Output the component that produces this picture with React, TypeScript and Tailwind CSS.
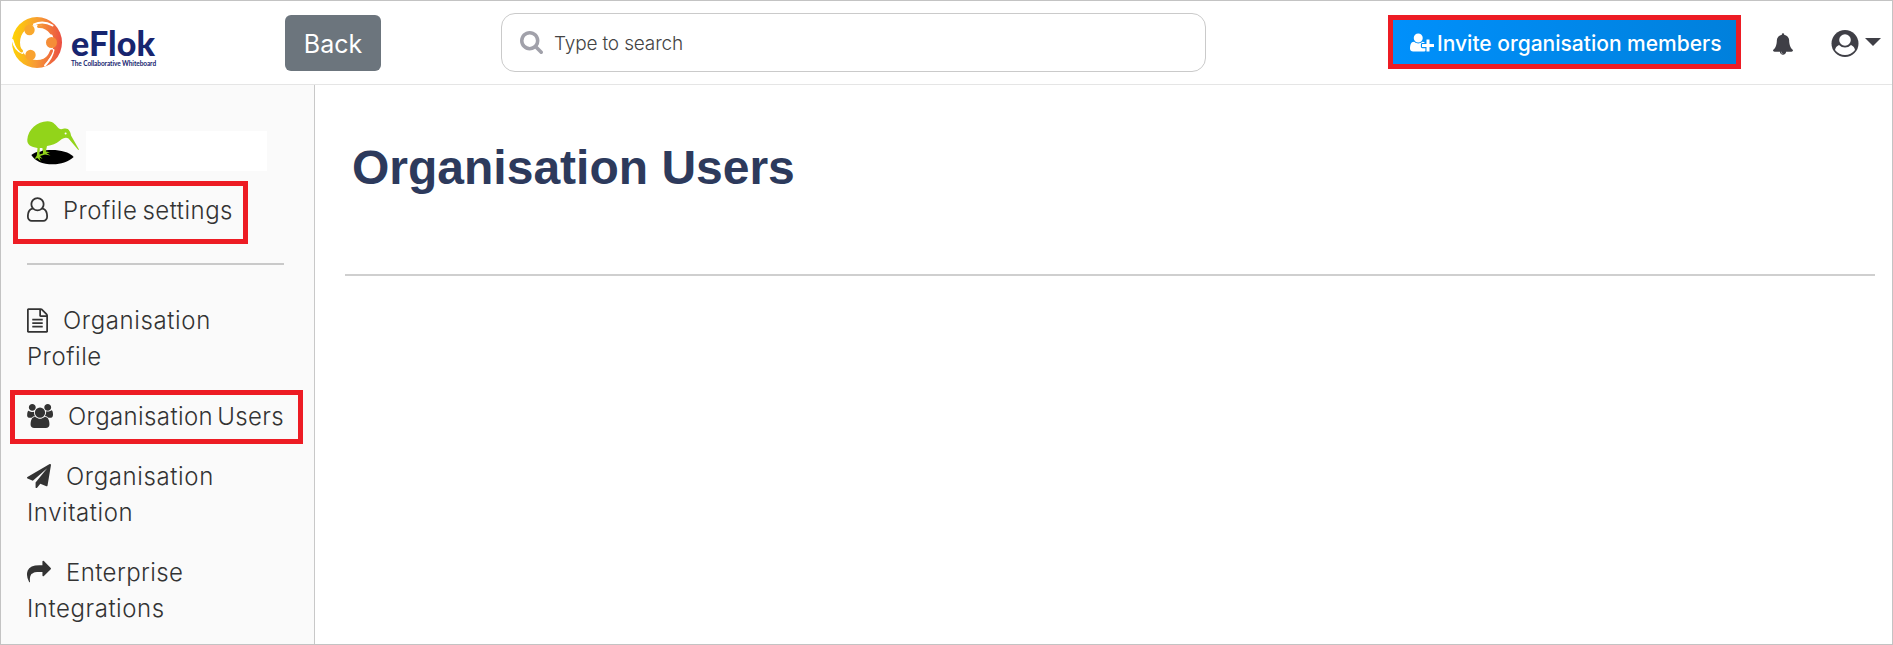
import React from "react";

type IconProps = { d: string; box: string; className: string };

function Icon({ d, box, className }: IconProps) {
  return (
    <svg viewBox={box} className={className} fill="currentColor" aria-hidden="true">
      <path d={d} />
    </svg>
  );
}

const USER = "M1201 784q47 14 89.5 38t89 73 79.5 115.5 55 172 22 236.5q0 154-100 263.5t-241 109.5h-854q-141 0-241-109.5t-100-263.5q0-131 22-236.5t55-172 79.5-115.5 89-73 89.5-38q-79-125-79-272 0-104 40.5-198.5t109.5-163.5 163.5-109.5 198.5-40.5 198.5 40.5 163.5 109.5 109.5 163.5 40.5 198.5q0 147-79 272zm-433-656q-159 0-271.5 112.5t-112.5 271.5 112.5 271.5 271.5 112.5 271.5-112.5 112.5-271.5-112.5-271.5-271.5-112.5zm427 1536q88 0 150.5-71.5t62.5-173.5q0-239-78.5-377t-225.5-145q-145 127-336 127t-336-127q-147 7-225.5 145t-78.5 377q0 102 62.5 173.5t150.5 71.5h854z";
const FILE = "M1596 380q28 28 48 76t20 88v1152q0 40-28 68t-68 28h-1344q-40 0-68-28t-28-68v-1600q0-40 28-68t68-28h896q40 0 88 20t76 48zm-444-244v376h376q-10-29-22-41l-313-313q-12-12-41-22zm384 1528v-1024h-416q-40 0-68-28t-28-68v-416h-768v1536h1280zm-1024-864q0-14 9-23t23-9h704q14 0 23 9t9 23v64q0 14-9 23t-23 9h-704q-14 0-23-9t-9-23v-64zm736 224q14 0 23 9t9 23v64q0 14-9 23t-23 9h-704q-14 0-23-9t-9-23v-64q0-14 9-23t23-9h704zm0 256q14 0 23 9t9 23v64q0 14-9 23t-23 9h-704q-14 0-23-9t-9-23v-64q0-14 9-23t23-9h704z";
const USERS = "M657 896q-162 5-265 128h-134q-82 0-138-40.5t-56-118.5q0-353 124-353 6 0 43.5 21t97.5 42.5 119 21.5q67 0 133-23-5 37-5 66 0 159 93 293zm1071 637q0 120-73 189.5t-194 69.5h-874q-121 0-194-69.5t-73-189.5q0-53 3.5-103.5t14-109 26.5-108.5 43-97.5 62-81 85.5-53.5 111.5-20q10 0 43 21.5t73 48 107 48 135 21.5 135-21.5 107-48 73-48 43-21.5q61 0 111.5 20t85.5 53.5 62 81 43 97.5 26.5 108.5 14 109 3.5 103.5zm-1024-1277q0 106-75 181t-181 75-181-75-75-181 75-181 181-75 181 75 75 181zm704 384q0 159-112.5 271.5t-271.5 112.5-271.5-112.5-112.5-271.5 112.5-271.5 271.5-112.5 271.5 112.5 112.5 271.5zm576 225q0 78-56 118.5t-138 40.5h-134q-103-123-265-128 93-134 93-293 0-29-5-66 66 23 133 23 59 0 119-21.5t97.5-42.5 43.5-21q124 0 124 353zm-128-609q0 106-75 181t-181 75-181-75-75-181 75-181 181-75 181 75 75 181z";
const PLANE = "M1764 11q33 24 27 64l-256 1536q-5 29-32 45-14 8-31 8-11 0-24-5l-453-185-242 295q-18 23-49 23-13 0-22-4-19-7-30.5-23.5t-11.5-36.5v-349l864-1059-1069 925-395-162q-37-14-40-55-2-40 32-59l1664-960q15-9 32-9 20 0 36 11z";
const SHARE = "M1792 640q0 26-19 45l-512 512q-19 19-45 19t-45-19-19-45v-256h-224q-98 0-175.5 6t-154 21.5-133 42.5-105.5 69.5-80 101-48.5 138.5-17.5 181q0 55 5 123 0 6 2.5 23.5t2.5 26.5q0 15-8.5 25t-23.5 10q-16 0-28-17-7-9-13-22t-13.5-30-10.5-24q-127-285-127-451 0-199 53-333 162-403 875-403h224v-256q0-26 19-45t45-19 45 19l512 512q19 19 19 45z";
const USER_PLUS = "M704 896q-159 0-271.5-112.5t-112.5-271.5 112.5-271.5 271.5-112.5 271.5 112.5 112.5 271.5-112.5 271.5-271.5 112.5zm960 128h352q13 0 22.5 9.5t9.5 22.5v192q0 13-9.5 22.5t-22.5 9.5h-352v352q0 13-9.5 22.5t-22.5 9.5h-192q-13 0-22.5-9.5t-9.5-22.5v-352h-352q-13 0-22.5-9.5t-9.5-22.5v-192q0-13 9.5-22.5t22.5-9.5h352v-352q0-13 9.5-22.5t22.5-9.5h192q13 0 22.5 9.5t9.5 22.5v352zm-736 224q0 52 38 90t90 38h256v238q-68 50-171 50h-874q-121 0-194-69t-73-190q0-53 3.5-103.5t14-109 26.5-108.5 43-97.5 62-81 85.5-53.5 111.5-20q19 0 39 17 79 61 154.5 91.5t164.5 30.5 164.5-30.5 154.5-91.5q20-17 39-17 132 0 217 96h-223q-52 0-90 38t-38 90v192z";
const BELL = "M912 1696q0-16-16-16-59 0-101.5-42.5t-42.5-101.5q0-16-16-16t-16 16q0 73 51.5 124.5t124.5 51.5q16 0 16-16zm816-288q0 52-38 90t-90 38h-448q0 106-75 181t-181 75-181-75-75-181h-448q-52 0-90-38t-38-90q50-42 91-88t85-119.5 74.5-158.5 50-206 19.5-260q0-152 117-282.5t307-158.5q-8-19-8-39 0-40 28-68t68-28 68 28 28 68q0 20-8 39 190 28 307 158.5t117 282.5q0 139 19.5 260t50 206 74.5 158.5 85 119.5 91 88z";
const SEARCH = "M1216 832q0-185-131.5-316.5t-316.5-131.5-316.5 131.5-131.5 316.5 131.5 316.5 316.5 131.5 316.5-131.5 131.5-316.5zm512 832q0 52-38 90t-90 38q-54 0-90-38l-343-342q-179 124-399 124-143 0-273.5-55.5t-225-150-150-225-55.5-273.5 55.5-273.5 150-225 225-150 273.5-55.5 273.5 55.5 225 150 150 225 55.5 273.5q0 220-124 399l343 343q37 37 37 90z";

function LogoMark() {
  return (
    <svg viewBox="0 0 52 54" className="h-[54px] w-[52px] shrink-0" fill="none" aria-hidden="true">
      <defs>
        <linearGradient id="ring" gradientUnits="userSpaceOnUse" x1="1" y1="26" x2="51" y2="30">
          <stop offset="0" stopColor="#fed403" />
          <stop offset="0.5" stopColor="#f79b35" />
          <stop offset="1" stopColor="#ea4c42" />
        </linearGradient>
      </defs>
      <path fillRule="evenodd" fill="url(#ring)" d="M26 1a25 25.500 0 1 1 0 51a25 25.500 0 1 1 0-51zM26 9a17 17.500 0 1 0 0 35a17 17.500 0 1 0 0-35z" />
      <g stroke="#fff" strokeWidth="2" strokeLinecap="round">
        <path d="M23 8.500Q32 4 41.500 9.500M1.500 24Q4 34.500 11.500 37M42.500 34Q41 42 34 49.500" />
      </g>
      <g stroke="url(#ring)" strokeWidth="3" strokeLinecap="round">
        <path d="M27.500 10.500Q35 10 40.500 17M5 22Q4.500 30 10.500 35M40.500 35Q38 42 31.500 46" />
      </g>
      <circle cx="18.500" cy="14" r="5.200" fill="#f9a82c" />
      <circle cx="40.500" cy="26.500" r="5.500" fill="#f58d38" />
      <circle cx="19.500" cy="39" r="5.200" fill="#f9a230" />
    </svg>
  );
}

function Kiwi() {
  return (
    <svg viewBox="0 0 54 45" className="h-[45px] w-[54px] shrink-0" aria-hidden="true">
      <path d="M4.300 34C9 30 17 29 25 29c9 0 17 2 21.700 7C41 41 34 43.300 26 43.300C15 43.300 8 40 4.300 34z" fill="#000" />
      <path d="M0.300 18.500C1 9 10 0.300 20.500 0.300C27 0.300 29 5 32 7.500C34 9 36 7.600 38.500 7.600C42 7.600 43.500 11 44 14.500L52 28.500L51.300 29L41.500 17.500C39 16 36 17 33 19.500C29 23 25 24.300 20 25L18.800 30.500L23 31.200L19.500 32.300L23.500 34.500L18 33.500L13 35L15.500 38L12.500 36.500L13.500 40L10.500 37L7.500 38L9.800 34.500L10.500 27C4 26 0 24 0.300 18.500z" fill="#92d41a" />
      <path d="M12.800 27h2.600l.5 4-3.300 2z" fill="#fafafa" />
      <path d="M12.500 31l3.500-1.500v3l-3.500 1z" fill="#000" />
      <circle cx="38.600" cy="12.500" r="1" fill="#fff" />
    </svg>
  );
}

function Rule({ className }: { className: string }) {
  return <hr className={`border-0 h-[2px] ${className}`} />;
}

export default function App() {
  return (
    <div className="flex h-[645px] w-[1893px] flex-col overflow-hidden border border-[#c3c3c3] bg-white font-['Inter','Liberation_Sans',sans-serif] text-[#333]">
      <header className="flex h-[84px] shrink-0 border-b border-[#e5e5e5]">
        <div className="flex w-[284px] pl-[10px] pt-[15px]">
          <LogoMark />
          <div className="ml-[8px] pt-[10px] font-['Lato','Inter',sans-serif] text-[#17256f]">
            <div className="h-[34px] whitespace-nowrap text-[34px] font-black leading-[34px] tracking-[0.1px]">eFlok</div>
            <div className="whitespace-nowrap text-[6.5px] font-bold leading-[8px] tracking-[-0.08px]">The Collaborative Whiteboard</div>
          </div>
        </div>
        <button className="mt-[14px] h-[56px] w-[96px] rounded-[6px] bg-[#6c757d] pt-[1px] text-[25px] leading-[36px] text-white">Back</button>
        <div className="ml-[120px] mt-[12px] flex h-[59px] w-[705px] items-center rounded-[14px] border border-[#cacaca] pl-[18px] text-[#444]">
          <Icon d={SEARCH} box="64 128 1664 1664" className="h-[23px] w-[23px] text-[#a1a1aa]" />
          <span className="ml-[11px] pt-[3px] text-[19px] font-light tracking-[-0.15px]">Type to search</span>
        </div>
        <div className="ml-[182px] mt-[14px] flex h-[54px] w-[353px] items-center border-[5px] border-[#ed1c24] bg-linear-to-r from-[#0090fb] to-[#0080dc] pl-[17px] text-white">
          <Icon d={USER_PLUS} box="0 128 2048 1536" className="h-[19px] w-[24px]" />
          <span className="ml-[3px] whitespace-nowrap pt-[3px] text-[21px] font-medium">Invite organisation members</span>
        </div>
        <Icon d={BELL} box="64 0 1664 1792" className="ml-[32px] mt-[32px] h-[22px] w-[20px] text-[#3f3f46]" />
        <svg viewBox="0 0 28 28" className="ml-[38px] mt-[28px] h-[28px] w-[28px]" aria-hidden="true">
          <circle cx="14" cy="14.500" r="13.500" fill="#3f3f46" />
          <circle cx="14" cy="11" r="5.800" fill="#fff" />
          <path d="M8 16Q10.500 18.500 14 18.500t6-2.500Q23.500 17.500 24 21Q20 26 14 26T4 21Q4.500 17.500 8 16z" fill="#fff" />
        </svg>
        <svg viewBox="0 0 16 8" className="ml-[6px] mt-[37px] h-[8px] w-[16px]" fill="#3f3f46" aria-hidden="true">
          <path d="M0 0h16l-8 8z" />
        </svg>
      </header>
      <div className="flex min-h-0 flex-1">
        <aside className="w-[314px] shrink-0 border-r border-[#c8c8c8] bg-[#fafafa] text-[24px] font-light leading-[36px] tracking-[0.55px]">
          <div className="flex h-[96px] pl-[26px] pt-[36px]">
            <Kiwi />
            <div className="ml-[5px] mt-[10px] h-[40px] w-[181px] bg-white" />
          </div>
          <div className="ml-[12px] flex h-[63px] w-[235px] border-[5px] border-[#ed1c24] pl-[9px] pt-[7px]">
            <Icon d={USER} box="0 0 1536 1792" className="mt-[4px] h-[25px] w-[21px]" />
            <span className="ml-[15px] whitespace-nowrap tracking-[0.48px] [word-spacing:-2px]">Profile settings</span>
          </div>
          <Rule className="ml-[26px] mt-[19px] w-[257px] bg-[#c9c9c9]" />
          <nav>
            <a className="mt-[38px] block h-[72px] pl-[26px]">
              <span className="flex"><Icon d={FILE} box="128 0 1536 1792" className="mt-[5px] h-[25px] w-[21px]" /><span className="ml-[15px] tracking-[0.62px]">Organisation</span></span>
              <span className="block">Profile</span>
            </a>
            <a className="ml-[9px] mt-[15px] flex h-[54px] w-[293px] border-[5px] border-[#ed1c24] pl-[12px] pt-[4px]">
              <Icon d={USERS} box="64 0 1920 1792" className="mt-[5px] h-[24px] w-[26px]" />
              <span className="ml-[15px] whitespace-nowrap tracking-[0.38px] [word-spacing:-3px]">Organisation Users</span>
            </a>
            <a className="mt-[15px] block h-[72px] pl-[26px]">
              <span className="flex"><Icon d={PLANE} box="0 0 1792 1792" className="mt-[5px] h-[24px] w-[24px]" /><span className="ml-[15px] tracking-[0.62px]">Organisation</span></span>
              <span className="block">Invitation</span>
            </a>
            <a className="mt-[24px] block h-[72px] pl-[26px]">
              <span className="flex"><Icon d={SHARE} box="0 0 1792 1792" className="mt-[5px] h-[24px] w-[24px]" /><span className="ml-[15px] tracking-[0.4px]">Enterprise</span></span>
              <span className="block">Integrations</span>
            </a>
          </nav>
        </aside>
        <main className="flex-1 pl-[30px] pt-[54px]">
          <h1 className="h-[58px] pl-[7px] font-['Liberation_Sans',Arial,sans-serif] text-[48px] font-bold leading-[58px] text-[#2d3a5c]">Organisation Users</h1>
          <Rule className="mt-[77px] w-[1530px] bg-[#cfcfcf]" />
        </main>
      </div>
    </div>
  );
}
